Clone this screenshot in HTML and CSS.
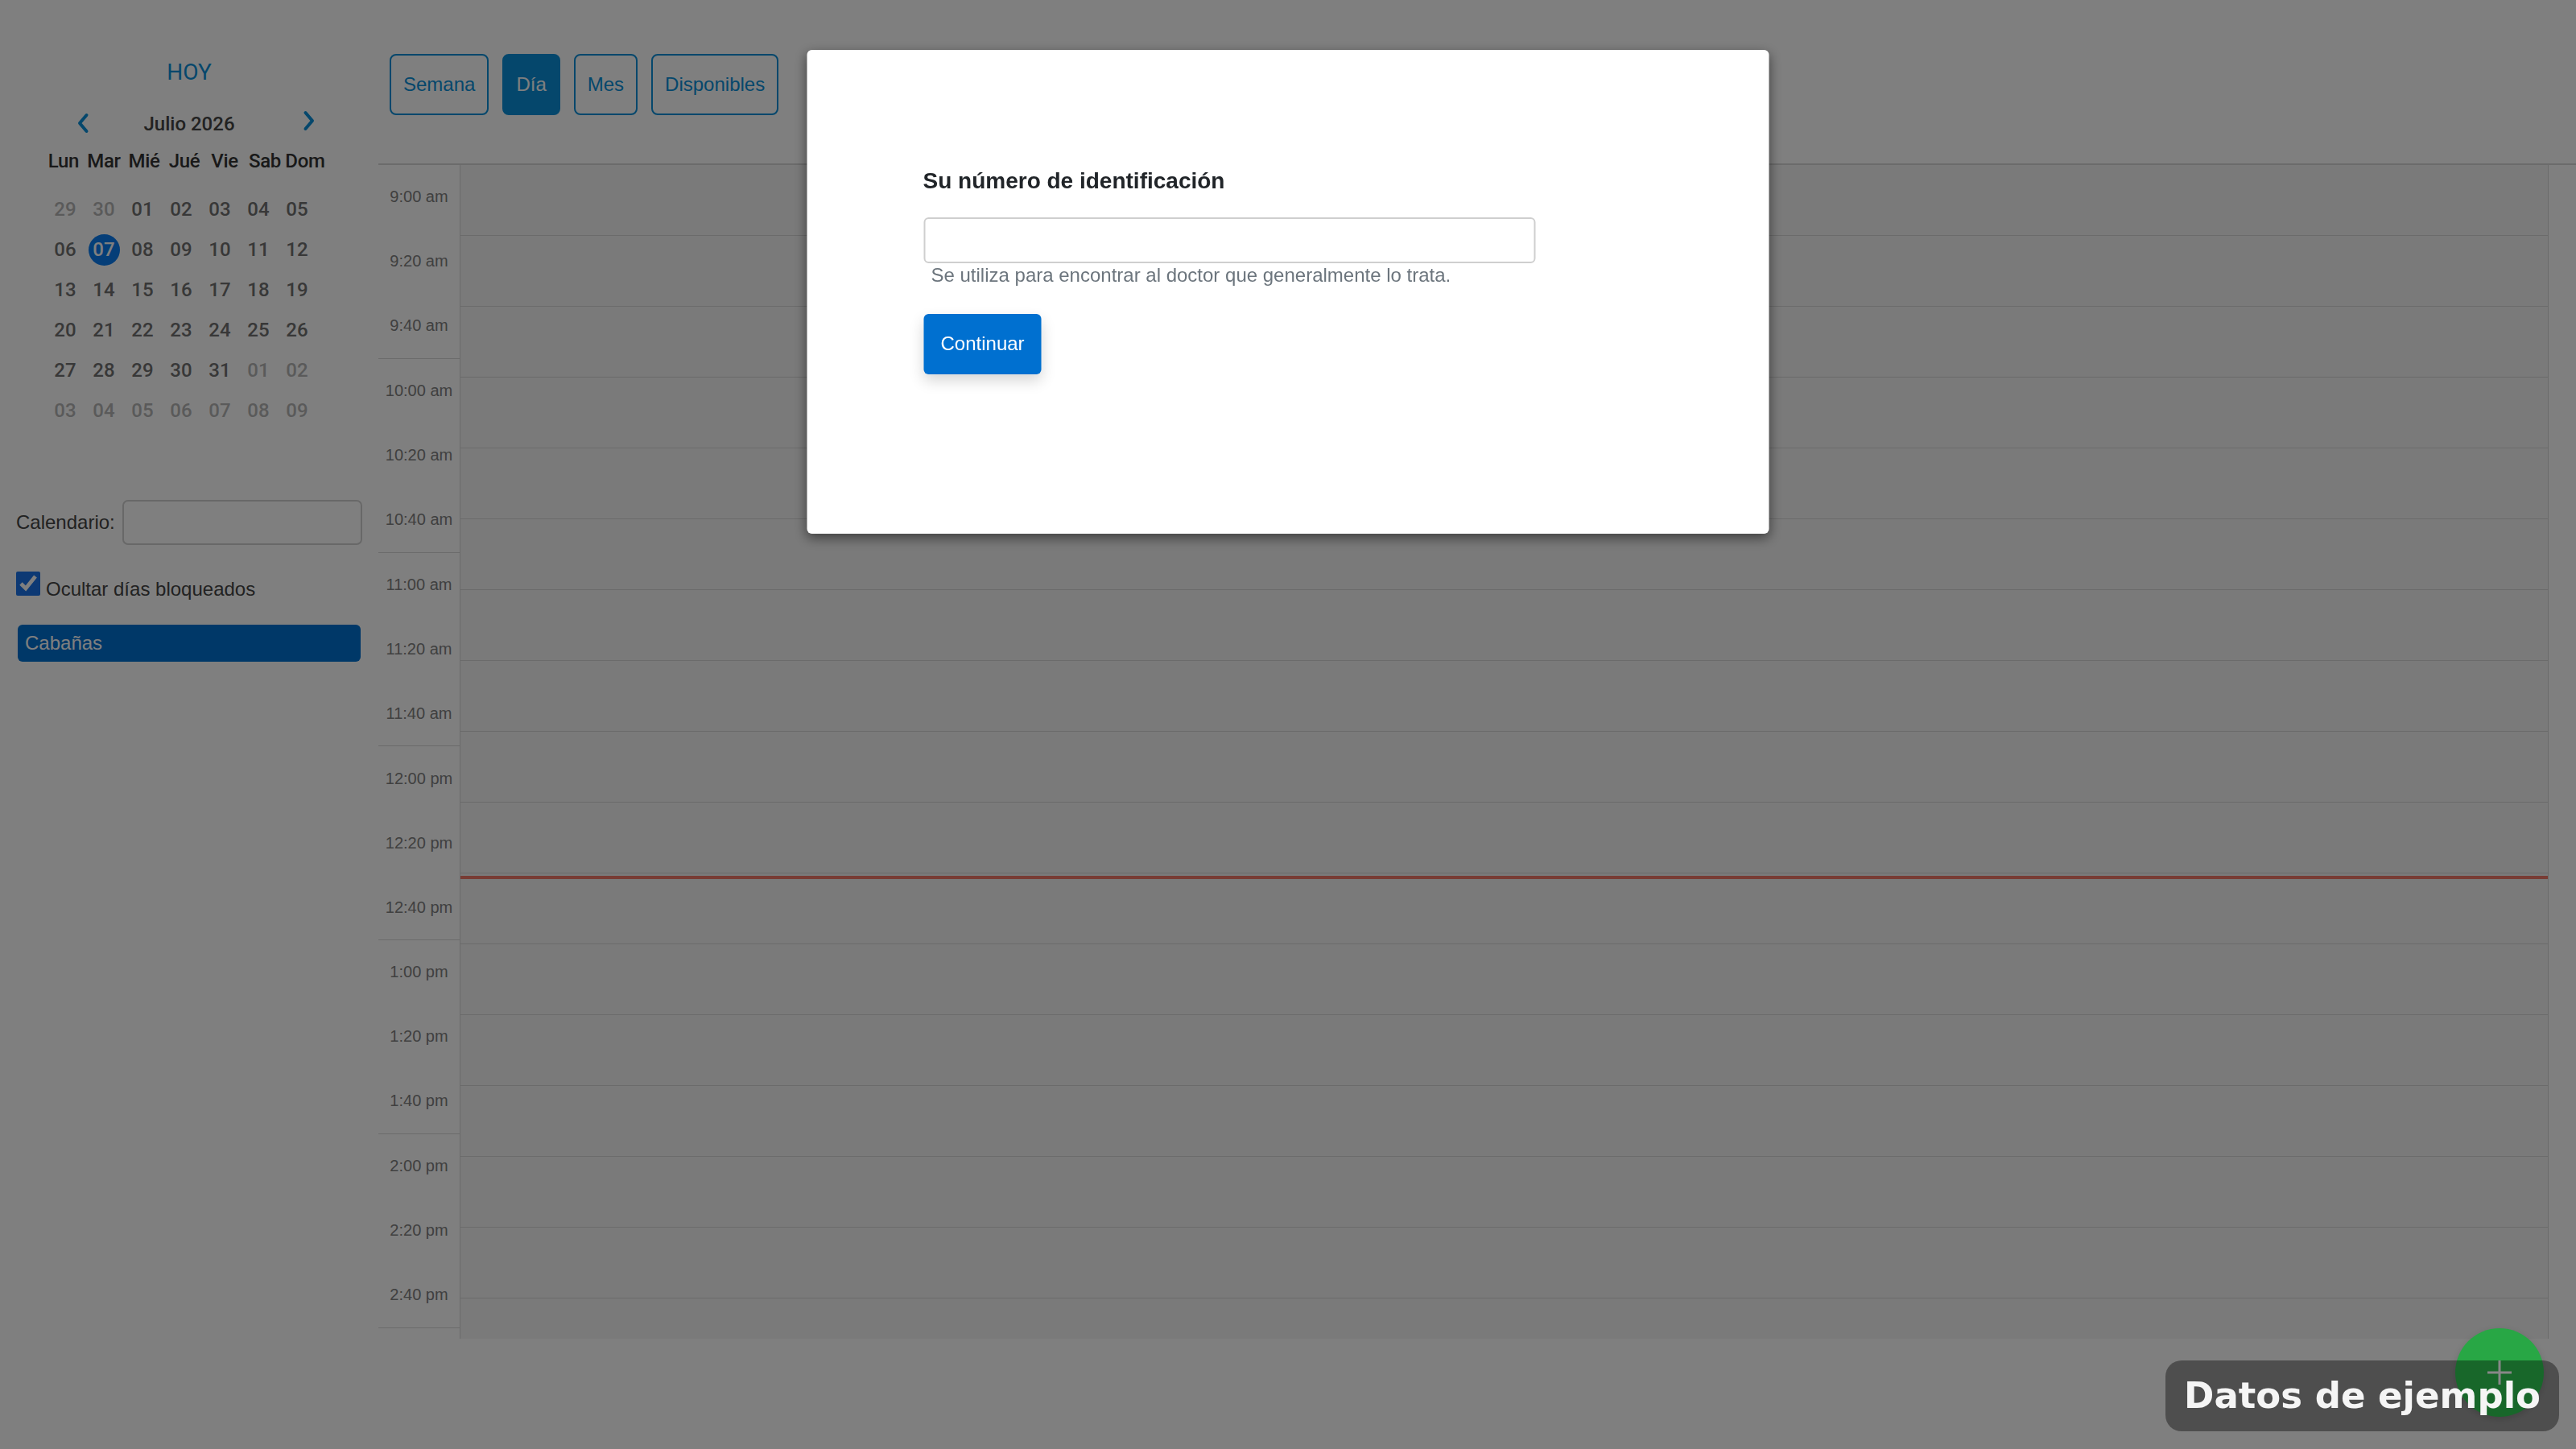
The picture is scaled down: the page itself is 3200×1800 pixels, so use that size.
FILE: index.html
```html
<!DOCTYPE html>
<html lang="es">
<head>
<meta charset="utf-8">
<title>Calendario</title>
<link rel="stylesheet" href="styles.css">
</head>
<body>
<div class="app">
  <aside class="sidebar">
    <div class="today">HOY</div>
    <div class="month-nav">
      <span class="chev chev-prev"><svg width="16" height="26" viewBox="0 0 16 26"><path d="M12.5 3 L4 13 L12.5 23" fill="none" stroke="currentColor" stroke-width="4" stroke-linecap="round" stroke-linejoin="round"/></svg></span>
      <span class="month-title">Julio 2026</span>
      <span class="chev chev-next"><svg width="16" height="26" viewBox="0 0 16 26"><path d="M3.5 3 L12 13 L3.5 23" fill="none" stroke="currentColor" stroke-width="4" stroke-linecap="round" stroke-linejoin="round"/></svg></span>
    </div>
    <div class="dow">
      <span>Lun</span><span>Mar</span><span>Mié</span><span>Jué</span><span>Vie</span><span>Sab</span><span>Dom</span>
    </div>
    <div class="days">
      <span class="other">29</span><span class="other">30</span><span>01</span><span>02</span><span>03</span><span>04</span><span>05</span>
      <span>06</span><span class="sel"><b>07</b></span><span>08</span><span>09</span><span>10</span><span>11</span><span>12</span>
      <span>13</span><span>14</span><span>15</span><span>16</span><span>17</span><span>18</span><span>19</span>
      <span>20</span><span>21</span><span>22</span><span>23</span><span>24</span><span>25</span><span>26</span>
      <span>27</span><span>28</span><span>29</span><span>30</span><span>31</span><span class="other">01</span><span class="other">02</span>
      <span class="other">03</span><span class="other">04</span><span class="other">05</span><span class="other">06</span><span class="other">07</span><span class="other">08</span><span class="other">09</span>
    </div>
    <div class="cal-field">
      <label class="cal-label">Calendario:</label>
      <input class="cal-input" type="text">
    </div>
    <label class="hide-blocked">
      <input type="checkbox" checked>
      <span class="hide-text">Ocultar días bloqueados</span>
    </label>
    <div class="resource">Cabañas</div>
  </aside>

  <main class="main">
    <div class="views">
      <button class="view-btn">Semana</button>
      <button class="view-btn active">Día</button>
      <button class="view-btn">Mes</button>
      <button class="view-btn">Disponibles</button>
    </div>
    <div class="grid-head"></div>
    <div class="grid">
      <div class="gutter">
        <div class="hour"><div class="lbl">9:00 am</div><div class="lbl">9:20 am</div><div class="lbl">9:40 am</div></div>
        <div class="hour"><div class="lbl">10:00 am</div><div class="lbl">10:20 am</div><div class="lbl">10:40 am</div></div>
        <div class="hour"><div class="lbl">11:00 am</div><div class="lbl">11:20 am</div><div class="lbl">11:40 am</div></div>
        <div class="hour"><div class="lbl">12:00 pm</div><div class="lbl">12:20 pm</div><div class="lbl">12:40 pm</div></div>
        <div class="hour"><div class="lbl">1:00 pm</div><div class="lbl">1:20 pm</div><div class="lbl">1:40 pm</div></div>
        <div class="hour"><div class="lbl">2:00 pm</div><div class="lbl">2:20 pm</div><div class="lbl">2:40 pm</div></div>
      </div>
      <div class="slots">
        <div class="slot"></div><div class="slot"></div><div class="slot"></div><div class="slot"></div>
        <div class="slot"></div><div class="slot"></div><div class="slot"></div><div class="slot"></div>
        <div class="slot"></div><div class="slot"></div><div class="slot"></div><div class="slot"></div>
        <div class="slot"></div><div class="slot"></div><div class="slot"></div><div class="slot"></div>
        <div class="slot"></div>
        <div class="now-line"></div>
      </div>
      <div class="grid-pad"></div>
    </div>
  </main>
</div>

<div class="backdrop"></div>

<div class="modal">
  <h3 class="modal-title">Su número de identificación</h3>
  <input class="modal-input" type="text">
  <div class="modal-help">Se utiliza para encontrar al doctor que generalmente lo trata.</div>
  <button class="modal-btn">Continuar</button>
</div>

<button class="fab"><svg width="34" height="34" viewBox="0 0 34 34"><path d="M17 2 V32 M2 17 H32" stroke="currentColor" stroke-width="3"/></svg></button>
<div class="sample-badge">Datos de ejemplo</div>
</body>
</html>
```

FILE: styles.css
```css
* { box-sizing: border-box; }

html, body {
  margin: 0;
  padding: 0;
  background: #fff;
  font-family: "Liberation Sans", Arial, sans-serif;
  overflow: hidden;
  height: 100%;
}

.app {
  display: flex;
  height: 1800px;
}

/* ---------- Sidebar ---------- */
.sidebar {
  width: 470px;
  flex: none;
  padding: 73px 20px 0 20px;
}

.today {
  font-family: Roboto, sans-serif;
  font-size: 28px;
  line-height: 34px;
  color: #0a8fd8;
  text-align: center;
}

.month-nav {
  margin-top: 32px;
  height: 30px;
  display: grid;
  grid-template-columns: 1fr auto 1fr;
  align-items: center;
}

.month-title {
  font-family: Roboto, sans-serif;
  font-weight: 500;
  font-size: 24px;
  line-height: 30px;
  color: #444;
}

.chev {
  color: #0a8fd8;
  display: flex;
}
.chev-prev { justify-self: start; margin-left: 75px; margin-top: -3px; }
.chev-next { justify-self: start; margin-left: 84px; margin-top: -8px; }

.dow {
  margin-top: 16px;
  margin-left: 34px;
  display: grid;
  grid-template-columns: repeat(7, 50px);
  font-family: Roboto, sans-serif;
  font-weight: 500;
  font-size: 24px;
  line-height: 30px;
  color: #333;
  text-align: center;
  letter-spacing: -0.3px;
  margin-bottom: 20px;
}

.days {
  margin-left: 37px;
  display: grid;
  grid-template-columns: repeat(7, 48px);
  grid-auto-rows: 50px;
  font-family: Roboto, sans-serif;
  font-weight: 500;
  font-size: 24px;
  color: #707070;
}
.days span {
  display: flex;
  align-items: center;
  justify-content: center;
}
.days .other { color: #b5b5b5; }
.days .sel b {
  width: 39px;
  height: 39px;
  border-radius: 50%;
  background: #0a7cf0;
  color: #fff;
  display: flex;
  align-items: center;
  justify-content: center;
  font-weight: 500;
}

.cal-field {
  margin-top: 86px;
  display: flex;
  align-items: center;
  gap: 9px;
}
.cal-label {
  font-size: 24px;
  color: #444;
}
.cal-input {
  width: 298px;
  height: 56px;
  border: 2px solid #d0d0d0;
  border-radius: 7px;
  background: #fff;
  margin: 0;
}

.hide-blocked {
  margin-top: 33px;
  display: flex;
  align-items: flex-end;
  gap: 7px;
}
.hide-blocked input {
  width: 30px;
  height: 30px;
  margin: 0;
  accent-color: #1a73e8;
}
.hide-text {
  font-size: 24px;
  line-height: 28px;
  color: #444;
  margin-bottom: -6px;
}

.resource {
  margin: 36px 2px 0 2px;
  height: 46px;
  line-height: 46px;
  padding-left: 9px;
  background: #0070d0;
  color: #fff;
  font-size: 24px;
  border-radius: 6px;
}

/* ---------- Main ---------- */
.main {
  flex: 1;
  padding-top: 67px;
  display: flex;
  flex-direction: column;
}

.views {
  display: flex;
  gap: 17px;
  padding-left: 14px;
}
.view-btn {
  font-family: "Liberation Sans", Arial, sans-serif;
  font-size: 24px;
  line-height: 28px;
  padding: 22px 15px;
  border: 2px solid #0a8fd8;
  border-radius: 8px;
  background: #fff;
  color: #0a8fd8;
  margin: 0;
}
.view-btn.active {
  background: #0a8fd8;
  color: #fff;
}

.grid-head {
  height: 62px;
  border-bottom: 2px solid #d6d6d6;
}

.grid {
  display: flex;
  height: 1458px;
  overflow: hidden;
}

.gutter {
  width: 102px;
  flex: none;
  border-right: 1px solid #d6d6d6;
}
.hour {
  height: 240.75px;
  border-bottom: 1px solid #d6d6d6;
}
.lbl {
  height: 79.92px;
  display: flex;
  align-items: center;
  justify-content: center;
  font-size: 20px;
  color: #808080;
}

.slots {
  flex: 1;
  position: relative;
  background: #f4f4f4;
  border-right: 1px solid #d6d6d6;
}
.slot {
  height: 88px;
  border-bottom: 1px solid #d6d6d6;
}
.now-line {
  position: absolute;
  left: 0;
  right: 0;
  top: 883px;
  height: 4px;
  background: #f07868;
}

.grid-pad {
  width: 34px;
  flex: none;
}

/* ---------- Modal ---------- */
.backdrop {
  position: fixed;
  inset: 0;
  background: rgba(0, 0, 0, 0.5);
  z-index: 1000;
}

.modal {
  position: fixed;
  top: 62px;
  left: 50%;
  transform: translateX(-50%);
  width: 1195px;
  height: 601px;
  background: #fff;
  border-radius: 6px;
  box-shadow: 0 5px 15px rgba(0, 0, 0, 0.5);
  padding: 146px 144px 0 144px;
  z-index: 1010;
}

.modal-title {
  margin: 0;
  font-size: 28px;
  line-height: 34px;
  font-weight: bold;
  color: #212529;
}

.modal-input {
  display: block;
  margin: 28px 0 0 1px;
  width: 760px;
  height: 57px;
  border: 2px solid #cfcfcf;
  border-radius: 6px;
  background: #fff;
}

.modal-help {
  margin-top: 1px;
  padding-left: 10px;
  font-size: 24px;
  line-height: 28px;
  color: #6c757d;
}

.modal-btn {
  display: block;
  margin: 34px 0 0 1px;
  font-family: "Liberation Sans", Arial, sans-serif;
  font-size: 24px;
  line-height: 28px;
  padding: 23px 21px 24px 21px;
  background: #0070d0;
  color: #fff;
  border: none;
  border-radius: 6px;
  box-shadow: 0 8px 18px rgba(0, 0, 0, 0.16);
}

/* ---------- Floating ---------- */
.fab {
  position: fixed;
  right: 40px;
  bottom: 40px;
  width: 110px;
  height: 110px;
  border-radius: 50%;
  border: none;
  background: #28a745;
  color: #dcdcdc;
  display: flex;
  align-items: center;
  justify-content: center;
  padding: 0;
  z-index: 1020;
  box-shadow: 0 3px 8px rgba(0, 0, 0, 0.15);
}

.sample-badge {
  position: fixed;
  right: 21px;
  bottom: 22px;
  padding: 18px 23px;
  line-height: 52px;
  font-family: "DejaVu Sans", sans-serif;
  font-weight: bold;
  font-size: 45px;
  color: #f5f5f5;
  background: rgba(0, 0, 0, 0.38);
  border-radius: 20px;
  z-index: 1030;
  white-space: nowrap;
}
```
